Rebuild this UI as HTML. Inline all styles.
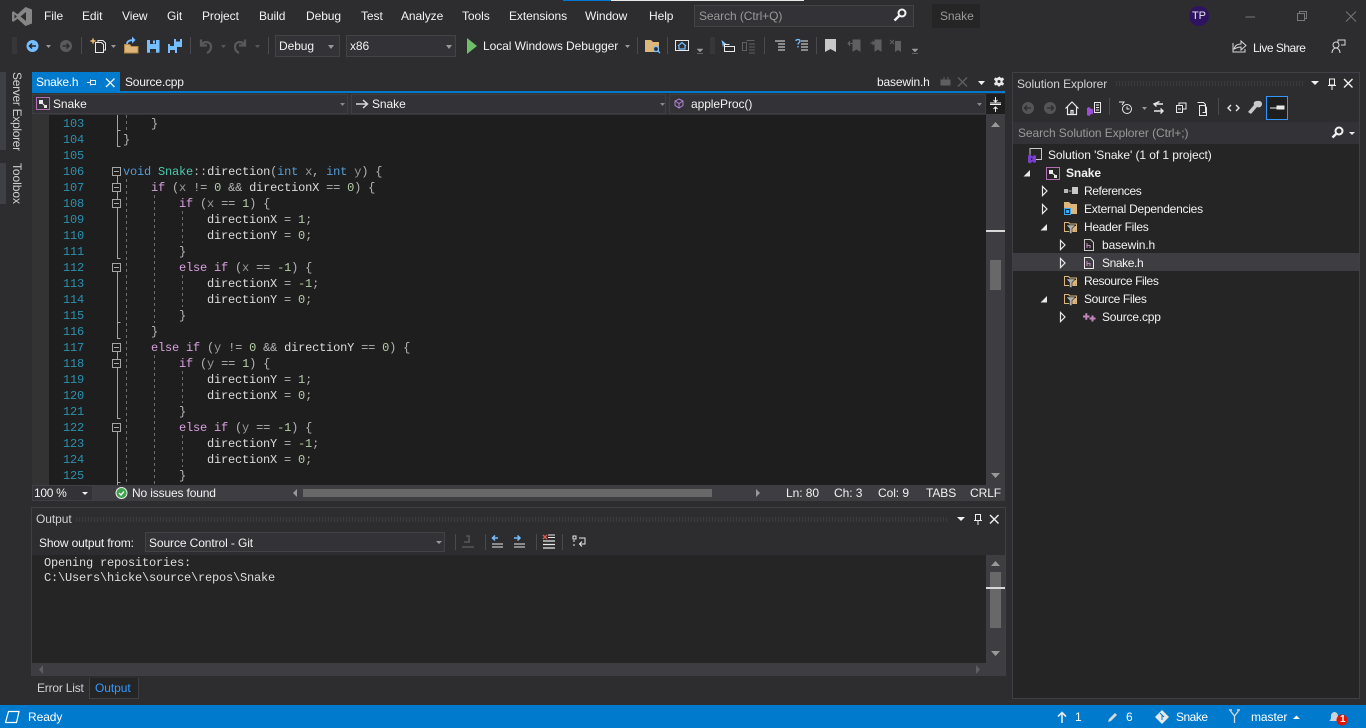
<!DOCTYPE html>
<html><head><meta charset="utf-8"><title>Snake</title>
<style>
html,body{margin:0;padding:0;background:#2d2d30;width:1366px;height:728px;overflow:hidden}
body{position:relative;font:12px/16px "Liberation Sans",sans-serif;color:#f1f1f1}
.a{position:absolute}
.t{position:absolute;white-space:pre;line-height:16px;letter-spacing:-.07px}
.b{position:absolute;box-sizing:border-box}
svg{position:absolute;overflow:visible}
#code{position:absolute;left:123px;top:115px;font:12px/16px "Liberation Mono",monospace;letter-spacing:-.2px;color:#b4b4b4;white-space:pre}
#nums{position:absolute;left:58px;top:115px;width:26px;text-align:right;font:12px/16px "Liberation Mono",monospace;letter-spacing:-.2px;color:#2b91af;white-space:pre}
.k{color:#569cd6}.c{color:#d8a0df}.y{color:#4ec9b0}.p{color:#9a9a9a}.n{color:#b5cea8}.i{color:#dcdcdc}
.dots{position:absolute;height:5px;background-image:radial-gradient(#46464a 35%,transparent 40%);background-size:3px 2px}
</style></head><body>
<div class="a" style="left:563px;top:0;width:48px;height:1px;background:#0078d4"></div>
<div class="a" style="left:611px;top:0;width:193px;height:1px;background:#e8e8e8"></div>

<svg style="left:0;top:0" width="40" height="30"><path d="M25.500 7L32 9.500V23.500L25.500 26L17.500 18.800L13.500 21.800L12 21V12L13.500 11.200L17.500 14.200zM26 12L20.500 16.500L26 21zM14.500 14.300V18.700L16.800 16.500z" fill="#868686" fill-rule="evenodd"/></svg>
<span class="t" style="left:44px;top:8px">File</span>
<span class="t" style="left:82px;top:8px">Edit</span>
<span class="t" style="left:122px;top:8px">View</span>
<span class="t" style="left:167px;top:8px">Git</span>
<span class="t" style="left:202px;top:8px">Project</span>
<span class="t" style="left:259px;top:8px">Build</span>
<span class="t" style="left:306px;top:8px">Debug</span>
<span class="t" style="left:361px;top:8px">Test</span>
<span class="t" style="left:401px;top:8px">Analyze</span>
<span class="t" style="left:462px;top:8px">Tools</span>
<span class="t" style="left:509px;top:8px">Extensions</span>
<span class="t" style="left:585px;top:8px">Window</span>
<span class="t" style="left:649px;top:8px">Help</span>

<div class="b" style="left:694px;top:5px;width:220px;height:22px;background:#333337;border:1px solid #434346"></div>
<span class="t" style="left:699px;top:8px;color:#999">Search (Ctrl+Q)</span>
<svg style="left:893px;top:8px" width="14" height="14" viewBox="0 0 14 14"><circle cx="9" cy="5" r="3.500" fill="none" stroke="#f1f1f1" stroke-width="2"/><path d="M6.500 7.500L1.500 12.500" stroke="#f1f1f1" stroke-width="2.400"/></svg>
<div class="b" style="left:932px;top:4px;width:48px;height:24px;background:#252526"></div>
<span class="t" style="left:940px;top:8px;color:#999">Snake</span>
<div class="b" style="left:1189px;top:6px;width:20px;height:20px;border-radius:50%;background:#2e1460"></div>
<span class="t" style="left:1192px;top:8px;font-size:11px;color:#e8e8e8">TP</span>
<svg style="left:1245px;top:10px" width="110" height="14"><path d="M0.500 7H10" stroke="#777" /><path d="M52.500 3.500h7v7h-7zM54.500 3.500v-2h7v7h-2" fill="none" stroke="#777"/><path d="M101 1.500l10 10M111 1.500l-10 10" stroke="#777"/></svg>

<!-- toolbar -->
<div class="a" style="left:12px;top:37px;width:5px;height:17px;background-image:radial-gradient(#55555a 40%,transparent 45%);background-size:2px 2px"></div>
<div class="a" style="left:710px;top:37px;width:5px;height:17px;background-image:radial-gradient(#55555a 40%,transparent 45%);background-size:2px 2px"></div>
<svg style="left:0;top:0" width="1366" height="72">
<circle cx="32.500" cy="46" r="6" fill="#75beff"/><path d="M36 46h-6M32 43.500L29.500 46l2.500 2.500" fill="none" stroke="#252526" stroke-width="1.500"/>
<path d="M46 45h5l-2.500 3z" fill="#999"/>
<circle cx="66" cy="46" r="6" fill="#5a5a5c"/><path d="M62.500 46h6M66.500 43.500L69 46l-2.500 2.500" fill="none" stroke="#2d2d30" stroke-width="1.500"/>
<path d="M81.500 37v17" stroke="#4a4a4e"/>
<path d="M95.500 42.500h6l2 2v8h-8zM98 42.500v-2h5l2.500 2.500v7h-2" fill="none" stroke="#e8e8e8"/><path d="M93 37.500l1 2.500 2.500 1-2.500 1-1 2.500-1-2.500-2.500-1 2.500-1z" fill="#e8b96c"/>
<path d="M111 45h5l-2.500 3z" fill="#999"/>
<path d="M124.500 44.500h5l2 2h6.500v6.500h-13.500z" fill="#dcb67a" stroke="#b5873f"/><path d="M127 44c0-3 3-4 7-4" fill="none" stroke="#75beff" stroke-width="1.800"/><path d="M132 36.500l3.500 3.500-3.500 3.500z" fill="#75beff"/>
<path d="M147 40h12.500v12.700H147z" fill="#75beff"/><path d="M150 40h6v4h-6zM150 49h6v3.700h-6z" fill="#2d2d30"/><rect x="153" y="40.500" width="2" height="3" fill="#75beff"/>
<path d="M168 44h9v9h-9z" fill="#75beff"/><path d="M174 39h8v8h-5v-3h-3z" fill="#75beff"/><path d="M170 50h5v3h-5zM176 39h4v2.500h-4zM170 44h4v2h-4z" fill="#2d2d30"/>
<path d="M190.500 37v17" stroke="#4a4a4e"/>
<path d="M201 39.500v6h6M201 45.500c3-5 10-4.500 10 1.500 0 3-2 5-4 6" fill="none" stroke="#58585b" stroke-width="2.300"/>
<path d="M221 45h5l-2.500 3z" fill="#58585b"/>
<path d="M245 39.500v6h-6M245 45.500c-3-5-10-4.500-10 1.500 0 3 2 5 4 6" fill="none" stroke="#58585b" stroke-width="2.300"/>
<path d="M255 45h5l-2.500 3z" fill="#58585b"/>
<path d="M268.500 37v17" stroke="#4a4a4e"/>
<path d="M467 38l10 8-10 8z" fill="#6fbf6a"/>
<path d="M625 45h5l-2.500 3z" fill="#999"/>
<path d="M637.500 37v17" stroke="#4a4a4e"/>
<path d="M645 40h6l2 2h6v10h-14z" fill="#dcb67a"/><circle cx="656" cy="49" r="2.500" fill="#2d2d30" stroke="#75beff" stroke-width="1.300"/><path d="M658 51l2 2" stroke="#75beff" stroke-width="1.300"/>
<path d="M667.500 37v17" stroke="#4a4a4e"/>
<path d="M675.500 40.500h13v10h-13z" fill="none" stroke="#e8e8e8"/><path d="M678 46l4-3.500 4 3.500M679 46v3h6v-3" fill="none" stroke="#75beff" stroke-width="1.200"/>
<path d="M697 49h6l-3 3zM697 53.500h6" fill="#999" stroke="#999" stroke-width=".5"/>
<path d="M721.500 40l5 4-2.500.5-1 3z" fill="#75beff"/><path d="M724.500 46.500h10v5h-10z M724.500 46.500v-2h5" fill="none" stroke="#e8e8e8"/>
<path d="M742.500 42.500h4v8h-4zM746.500 40.500h8M749 44h6M749 47h6M749 50h6M749 53h6" fill="none" stroke="#5f5f62"/>
<path d="M764.500 37v17" stroke="#4a4a4e"/>
<path d="M775 41h10M778 44h7M778 47h7M778 50h7" stroke="#e8e8e8"/>
<path d="M801 41h7M801 44h7M801 47h7M801 50h7" stroke="#e8e8e8"/><path d="M796 41c0-2 4-2 4 0 0 2-2 1.500-2 3.500M798 46v1.500" fill="none" stroke="#75beff" stroke-width="1.300"/>
<path d="M816.500 37v17" stroke="#4a4a4e"/>
<path d="M825 39h11v13l-5.500-3-5.500 3z" fill="#c8c8c8"/>
<path d="M853 40h7v11l-3.500-2-3.500 2zM848 43.500h5M850 41l-2 2.500 2 2.500" fill="#5f5f62" stroke="#5f5f62"/>
<path d="M875 40h6v11l-3-2-3 2zM870 43h5M872.500 41l2 2-2 2" fill="#5f5f62" stroke="#5f5f62"/>
<path d="M895 41h6v11l-3-2-3 2z" fill="#5f5f62"/><path d="M890 40l4 4M894 40l-4 4" stroke="#5f5f62"/>
<path d="M912 49h6l-3 3zM912 53.500h6" fill="#999" stroke="#999" stroke-width=".5"/>
<path d="M1233 43v9h12v-3M1234 49c1-4 4-5 7-5v-3l5 4.500-5 4.500v-3c-3 0-5 1-7 2z" fill="none" stroke="#d8d8d8"/>
<circle cx="1336" cy="45" r="3" fill="none" stroke="#d8d8d8"/><path d="M1332 53c0-3 2-5 4-5s4 2 4 5M1338 43v-3h7v5h-4" fill="none" stroke="#d8d8d8"/>
</svg>
<span class="t" style="left:483px;top:38px">Local Windows Debugger</span>
<div class="b" style="left:275px;top:35px;width:65px;height:22px;background:#333337;border:1px solid #434346"></div>
<span class="t" style="left:279px;top:38px">Debug</span>
<div class="a" style="left:328px;top:45px;border:3px solid transparent;border-top:4px solid #999"></div>
<div class="b" style="left:346px;top:35px;width:110px;height:22px;background:#333337;border:1px solid #434346"></div>
<span class="t" style="left:350px;top:38px">x86</span>
<div class="a" style="left:446px;top:45px;border:3px solid transparent;border-top:4px solid #999"></div>
<span class="t" style="left:1253px;top:40px;letter-spacing:-.5px">Live Share</span>

<!-- left sidebar -->
<div class="a" style="left:0;top:72px;width:6px;height:78px;background:#3f3f46"></div>
<div class="a" style="left:0;top:163px;width:6px;height:41px;background:#3f3f46"></div>
<span class="t" style="left:9px;top:72px;writing-mode:vertical-rl;color:#d0d0d0;letter-spacing:-.3px">Server Explorer</span>
<span class="t" style="left:9px;top:163px;writing-mode:vertical-rl;color:#d0d0d0">Toolbox</span>

<!-- tabs -->
<div class="a" style="left:32px;top:72px;width:88px;height:19px;background:#007acc"></div>
<div class="a" style="left:32px;top:91px;width:973px;height:2px;background:#007acc"></div>
<span class="t" style="left:36px;top:74px;color:#fff;letter-spacing:-.25px">Snake.h</span>
<svg style="left:86px;top:78px" width="34" height="10"><path d="M1 4.500h3M4.500 1.500v6M4.500 2.500h5v4h-5z" fill="none" stroke="#e8e8e8"/><path d="M20 0.500l8.500 8.500M28.500 0.500L20 9" stroke="#f1f1f1" stroke-width="1.300"/></svg>
<span class="t" style="left:125px;top:74px;letter-spacing:-.2px">Source.cpp</span>
<span class="t" style="left:877px;top:74px;letter-spacing:-.15px">basewin.h</span>
<svg style="left:0;top:0" width="1366" height="100"><path d="M941 80h9v5h-9zM944 77v3M948 77v3" stroke="#5f5f62" fill="#5f5f62"/><path d="M958 77.500l9 9M967 77.500l-9 9" stroke="#5f5f62" stroke-width="1.300"/><path d="M978 81h7l-3.500 4z" fill="#f1f1f1"/><path d="M999 76.500l1.500 1.500 2-.5 1 2-1.500 1.500 0 1 1.500 1.500-1 2-2-.5-1.500 1.500h-1l-1.500-1.500-2 .5-1-2 1.500-1.500v-1l-1.500-1.500 1-2 2 .5z" fill="#e8e8e8" transform="translate(.5 0)"/><circle cx="999" cy="81.500" r="1.500" fill="#2d2d30"/></svg>

<!-- nav bar -->
<div class="a" style="left:32px;top:93px;width:973px;height:22px;background:#333337"></div>
<div class="b" style="left:32px;top:94px;width:316px;height:20px;background:#333337;border:1px solid #3f3f42"></div>
<div class="b" style="left:351px;top:94px;width:315px;height:20px;background:#333337;border:1px solid #3f3f42"></div>
<div class="b" style="left:669px;top:94px;width:317px;height:20px;background:#333337;border:1px solid #3f3f42"></div>
<div class="a" style="left:986px;top:94px;width:19px;height:20px;background:#1e1e1e"></div>
<svg style="left:0;top:0" width="1366" height="120">
<path d="M36.500 97.500h13v12h-13z" fill="none" stroke="#b46eb4"/><path d="M39 100h4v4h-4zM44 105h3v3h-3z" fill="#e8e8e8"/><path d="M42 103l3 3" stroke="#e8e8e8"/>
<path d="M340 103h5l-2.500 3z M660 103h5l-2.500 3zM977 103h5l-2.500 3z" fill="#888"/>
<path d="M356 104h11M363 100l4.500 4-4.500 4" fill="none" stroke="#d8d8d8" stroke-width="1.500"/>
<path d="M679 99l4 2v4.500l-4 2.500-4-2.500v-4.500zM675 101l4 2.500 4-2.500M679 103.500v4.500" fill="none" stroke="#b180d7"/>
<path d="M990 104.500h11M995.500 97v5M993.500 100l2 2 2-2M995.500 112v-5M993.500 109l2-2 2 2M990 103h11" fill="none" stroke="#f1f1f1"/>
</svg>
<span class="t" style="left:53px;top:96px">Snake</span>
<span class="t" style="left:372px;top:96px">Snake</span>
<span class="t" style="left:691px;top:96px">appleProc()</span>

<!-- editor -->
<div class="a" style="left:32px;top:115px;width:17px;height:370px;background:#333333"></div>
<div class="a" style="left:49px;top:115px;width:937px;height:370px;background:#1e1e1e;overflow:hidden">
<div class="a" style="left:-49px;top:-115px;width:1000px;height:500px">
<svg style="left:0;top:0" width="1000" height="500">
<g stroke="#a5a5a5" fill="none">
<path d="M117.500 115v31.500h3M117.500 130.500h3M117.500 175.500v8M117.500 191.500v8M117.500 207.500v51h3M117.500 271.500v51h3M117.500 322.500v16h3M117.500 351.500v8M117.500 367.500v51h3M117.500 431.500v51h3M117.500 482.500v3"/>
<g fill="#1e1e1e">
<rect x="112.500" y="167.500" width="8" height="8"/><rect x="112.500" y="183.500" width="8" height="8"/><rect x="112.500" y="199.500" width="8" height="8"/><rect x="112.500" y="263.500" width="8" height="8"/><rect x="112.500" y="343.500" width="8" height="8"/><rect x="112.500" y="359.500" width="8" height="8"/><rect x="112.500" y="423.500" width="8" height="8"/>
</g>
<path d="M114 171.500h5M114 187.500h5M114 203.500h5M114 267.500h5M114 347.500h5M114 363.500h5M114 427.500h5"/>
</g>
<g stroke="#6f6f6f" stroke-dasharray="3 3" fill="none">
<path d="M126.500 115v16M126.500 179v306M154.500 195v128M154.500 355v130M182.500 211v32M182.500 275v32M182.500 371v32M182.500 435v32"/>
</g>
</svg>
<div id="nums" style="top:116px">103
104
105
106
107
108
109
110
111
112
113
114
115
116
117
118
119
120
121
122
123
124
125</div>
<div id="code" style="top:116px">    }
}

<span class="k">void</span> <span class="y">Snake</span>::<span class="i">direction</span>(<span class="k">int</span> <span class="p">x</span>, <span class="k">int</span> <span class="p">y</span>) {
    <span class="c">if</span> (<span class="p">x</span> != <span class="n">0</span> &amp;&amp; <span class="i">directionX</span> == <span class="n">0</span>) {
        <span class="c">if</span> (<span class="p">x</span> == <span class="n">1</span>) {
            <span class="i">directionX</span> = <span class="n">1</span>;
            <span class="i">directionY</span> = <span class="n">0</span>;
        }
        <span class="c">else if</span> (<span class="p">x</span> == <span class="n">-1</span>) {
            <span class="i">directionX</span> = <span class="n">-1</span>;
            <span class="i">directionY</span> = <span class="n">0</span>;
        }
    }
    <span class="c">else if</span> (<span class="p">y</span> != <span class="n">0</span> &amp;&amp; <span class="i">directionY</span> == <span class="n">0</span>) {
        <span class="c">if</span> (<span class="p">y</span> == <span class="n">1</span>) {
            <span class="i">directionY</span> = <span class="n">1</span>;
            <span class="i">directionX</span> = <span class="n">0</span>;
        }
        <span class="c">else if</span> (<span class="p">y</span> == <span class="n">-1</span>) {
            <span class="i">directionY</span> = <span class="n">-1</span>;
            <span class="i">directionX</span> = <span class="n">0</span>;
        }</div>
</div></div>

<!-- editor v-scroll -->
<div class="a" style="left:986px;top:114px;width:19px;height:371px;background:#3e3e42"></div>
<div class="a" style="left:990px;top:260px;width:11px;height:30px;background:#686868"></div>
<div class="a" style="left:986px;top:230px;width:19px;height:2px;background:#d8d8d8"></div>
<svg style="left:0;top:0" width="1366" height="490"><path d="M991 127l4.500-5 4.500 5zM991 473l4.500 5 4.500-5z" fill="#999"/></svg>

<!-- editor status -->
<div class="a" style="left:32px;top:485px;width:973px;height:16px;background:#3e3e42"></div>
<div class="b" style="left:32px;top:485px;width:61px;height:16px;background:#333337;border:1px solid #3f3f46"></div>
<span class="t" style="left:34px;top:485px;letter-spacing:-.3px">100 %</span>
<div class="a" style="left:82px;top:492px;border:3px solid transparent;border-top:3px solid #f1f1f1"></div>
<svg style="left:0;top:0" width="1366" height="505"><circle cx="121.500" cy="493" r="5.500" fill="#3ca34c" stroke="#e8e8e8"/><path d="M119 493l2 2 3-3.500" fill="none" stroke="#fff" stroke-width="1.300"/><path d="M297 489v8l-4-4zM756 489v8l4-4z" fill="#999"/></svg>
<span class="t" style="left:132px;top:485px;color:#f1f1f1;letter-spacing:-.15px">No issues found</span>
<div class="a" style="left:303px;top:489px;width:409px;height:8px;background:#686868"></div>
<span class="t" style="left:786px;top:485px">Ln: 80</span>
<span class="t" style="left:834px;top:485px">Ch: 3</span>
<span class="t" style="left:878px;top:485px">Col: 9</span>
<span class="t" style="left:926px;top:485px">TABS</span>
<span class="t" style="left:970px;top:485px">CRLF</span>

<!-- output -->
<div class="b" style="left:31px;top:507px;width:975px;height:191px;border:1px solid #3f3f46;background:#2d2d30"></div>
<span class="t" style="left:36px;top:511px;color:#d0d0d0">Output</span>
<div class="dots" style="left:75px;top:517px;width:874px"></div>
<span class="t" style="left:39px;top:535px;letter-spacing:-.15px">Show output from:</span>
<div class="b" style="left:145px;top:532px;width:300px;height:20px;background:#333337;border:1px solid #434346"></div>
<span class="t" style="left:149px;top:535px;letter-spacing:-.1px">Source Control - Git</span>
<svg style="left:0;top:0" width="1366" height="560">
<path d="M957 517h8l-4 4z" fill="#f1f1f1"/>
<path d="M975.500 514.500h5v6h-5zM974 520.500h8M978 521v4" fill="none" stroke="#f1f1f1"/>
<path d="M990 515l8.500 8.500M998.500 515L990 523.500" stroke="#f1f1f1" stroke-width="1.400"/>
<path d="M436 541h6l-3 3z" fill="#999"/>
<path d="M455.500 534v16M485.500 534v16M536.500 534v16M562.500 534v16" stroke="#4a4a4e"/>
<path d="M466 536h3v6M464 542h6M462 547h12" fill="none" stroke="#5f5f62" stroke-width="1.300"/>
<path d="M492 544h11M492 547h11" stroke="#e8e8e8"/><path d="M498 538h-5M495 535.500L492.500 538l2.500 2.500" fill="none" stroke="#75beff" stroke-width="1.500"/>
<path d="M514 544h11M514 547h11" stroke="#e8e8e8"/><path d="M514 538h6M517.500 535.500L520 538l-2.500 2.500" fill="none" stroke="#75beff" stroke-width="1.500"/>
<path d="M543 541h12M543 544.500h12M543 548h12" stroke="#e8e8e8" stroke-width="1.300"/><path d="M548 535h7M548 537.500h7" stroke="#e8e8e8"/><path d="M543 535l4 4M547 535l-4 4" stroke="#e05a4f" stroke-width="1.300"/>
<path d="M579 538h6v6h-5M582 541.500L579.500 544l2.500 2.500" fill="none" stroke="#e8e8e8"/><path d="M573 536h3v3h-3zM573 541h2M573 545h2" fill="none" stroke="#e8e8e8"/>
</svg>
<div class="a" style="left:32px;top:555px;width:954px;height:108px;background:#252526"></div>
<div class="a" style="left:44px;top:556px;font:12px/15px 'Liberation Mono',monospace;letter-spacing:-.2px;color:#dcdcdc;white-space:pre">Opening repositories:
C:\Users\hicke\source\repos\Snake</div>
<div class="a" style="left:986px;top:555px;width:19px;height:108px;background:#3e3e42"></div>
<div class="a" style="left:990px;top:572px;width:11px;height:56px;background:#686868"></div>
<div class="a" style="left:986px;top:587px;width:19px;height:2px;background:#d8d8d8"></div>
<div class="a" style="left:32px;top:663px;width:973px;height:13px;background:#3e3e42"></div>
<svg style="left:0;top:0" width="1366" height="680"><path d="M991 566l4.500-5 4.500 5zM991 651l4.500 5 4.500-5z" fill="#999"/><path d="M43 665v9l-4-4.500zM976 665v9l4-4.500z" fill="#5f5f62"/></svg>
<div class="a" style="left:31px;top:676px;width:975px;height:22px;background:#2d2d30"></div>
<span class="t" style="left:37px;top:680px;color:#d0d0d0;letter-spacing:-.2px">Error List</span>
<div class="b" style="left:89px;top:678px;width:50px;height:21px;background:#252526;border:1px solid #3f3f46;border-top:0"></div>
<span class="t" style="left:95px;top:680px;color:#3399ff">Output</span>

<!-- Solution explorer -->
<div class="b" style="left:1012px;top:72px;width:348px;height:627px;border:1px solid #3f3f46;background:#2d2d30"></div>
<span class="t" style="left:1017px;top:76px;color:#d0d0d0">Solution Explorer</span>
<div class="dots" style="left:1115px;top:81px;width:190px"></div>
<svg style="left:0;top:0" width="1366" height="145">
<path d="M1311 81h8l-4 4z" fill="#f1f1f1"/>
<path d="M1329.500 79h5v6h-5zM1328 85.500h8M1332 86v4" fill="none" stroke="#f1f1f1"/>
<path d="M1344 79l8.500 8.500M1352.500 79l-8.500 8.500" stroke="#f1f1f1" stroke-width="1.400"/>
<circle cx="1028" cy="108" r="6" fill="#555558"/><path d="M1031 108h-6M1027 105.500l-2.500 2.500 2.500 2.500" fill="none" stroke="#2d2d30" stroke-width="1.300"/>
<circle cx="1050" cy="108" r="6" fill="#555558"/><path d="M1047 108h6M1051 105.500l2.500 2.500-2.500 2.500" fill="none" stroke="#2d2d30" stroke-width="1.300"/>
<path d="M1065.500 108.500l6.500-6.500 6.500 6.500M1067.500 107v7.500h9v-7.500M1071 114.500v-4h2v4" fill="none" stroke="#e8e8e8" stroke-width="1.200"/>
<path d="M1094.500 102.500h6v10h-6zM1096 105h3M1096 107.500h3M1096 110h3" fill="none" stroke="#e8e8e8"/><path d="M1087 108l2-1 3 2.500 1-1v6l-1-1-3 2.500-2-1z" fill="#9b4fd8"/>
<path d="M1109.500 98v17" stroke="#4a4a4e"/>
<circle cx="1127" cy="109" r="4.500" fill="none" stroke="#e8e8e8"/><path d="M1127 106.500V109h2.500M1119 102h5l-2 3" fill="none" stroke="#e8e8e8"/>
<path d="M1142 107h5l-2.500 3z" fill="#999"/>
<path d="M1154 104h9M1159.500 101.500L1154 104l2.500 2.500M1154 111h9M1160.500 108.500L1163 111l-2.500 2.500" fill="none" stroke="#e8e8e8" stroke-width="1.400"/>
<path d="M1176.500 105.500h6v7h-6zM1179 105.500v-2.500h7v6h-3.500M1178 109h3" fill="none" stroke="#e8e8e8"/>
<path d="M1197.500 102.500h6l2 2v8h-3M1199.500 105.500h5l2 2v8h-7z" fill="none" stroke="#e8e8e8"/>
<path d="M1218.500 98v17" stroke="#4a4a4e"/>
<path d="M1231 105l-3 3 3 3M1236 105l3 3-3 3" fill="none" stroke="#e8e8e8" stroke-width="1.400"/>
<path d="M1257 101c2-.5 5 0 5 3 0 3-3 4-5 3l-6 7-3-2 6-7c-1-3 1-4 3-4z" fill="#c8c8c8"/>
<rect x="1266.500" y="96.500" width="21" height="23" fill="#1e1e1e" stroke="#3399ff"/>
<path d="M1270 108h7M1277 106h7v3h-7z" stroke="#e8e8e8" fill="#e8e8e8"/>
</svg>
<div class="a" style="left:1013px;top:122px;width:346px;height:22px;background:#333337"></div>
<span class="t" style="left:1018px;top:125px;color:#999;letter-spacing:-.08px">Search Solution Explorer (Ctrl+;)</span>
<svg style="left:0;top:0" width="1366" height="145"><circle cx="1339" cy="131" r="3.500" fill="none" stroke="#f1f1f1" stroke-width="2"/><path d="M1336.500 133.500l-4 4" stroke="#f1f1f1" stroke-width="2.400"/><path d="M1349 132h6l-3 3z" fill="#e8e8e8"/></svg>
<div class="a" style="left:1013px;top:144px;width:346px;height:554px;background:#252526"></div>
<div class="a" style="left:1013px;top:253px;width:346px;height:18px;background:#3e3e42"></div>
<svg style="left:0;top:0" width="1366" height="330">
<path d="M1030 155v-6.500h11.500v11h-7" fill="none" stroke="#c8c8c8"/><path d="M1028 155.500l2-1 2.500 2 1.800-1.500 1.700.8v6.400l-1.700.8-1.800-1.500-2.500 2-2-1z" fill="#7a3fd0"/><path d="M1031 157.800v2.400l2-1.200z" fill="#252526"/>
<path d="M1023.500 176.500l6.500-6.500v6.500z" fill="#e8e8e8"/>
<path d="M1046.500 167.500h13v12h-13z" fill="none" stroke="#b46eb4"/><path d="M1049 170h4v4h-4zM1054 175h3v3h-3z" fill="#e8e8e8"/><path d="M1052 173l4 3" stroke="#e8e8e8"/>
<path d="M1042.500 186.500v9l4.500-4.500zM1042.500 204.500v9l4.500-4.500z" fill="none" stroke="#e8e8e8" stroke-width="1.200"/>
<path d="M1040.500 230.500l6.500-6.500v6.500zM1040.500 302.500l6.500-6.500v6.500z" fill="#e8e8e8"/>
<path d="M1064 189h4v4h-4z" fill="#b8b8b8"/><rect x="1068.500" y="190.500" width="3" height="1" fill="#b8b8b8"/><rect x="1072" y="187" width="6" height="7" fill="#c8c8c8"/>
<path d="M1064 202h5l2 2h6v10h-13z" fill="#dcb67a"/><rect x="1064.500" y="208.500" width="6" height="6" fill="#252526" stroke="#3ea8f0"/><rect x="1066" y="210" width="3" height="3" fill="#3ea8f0"/>
<g id="f"><path d="M1064.500 231.500v-9h4l1.500 1.500h6.500v7.500z" fill="none" stroke="#dcb67a"/><path d="M1068 226h9l-1.500 5.500h-4z" fill="#dcb67a"/><path d="M1066 225h9.500l-3.500 3.500v5h-2.500v-5z" fill="#b0b0b0" stroke="#252526" stroke-width=".6"/></g>
<use href="#f" y="54"/><use href="#f" y="72"/>
<path d="M1060.500 240.500v9l4.500-4.500zM1060.500 258.500v9l4.500-4.500zM1060.500 312.500v9l4.500-4.500z" fill="none" stroke="#e8e8e8" stroke-width="1.200"/>
<path d="M1084.500 239.500h6l3 3v8h-9z" fill="none" stroke="#c8c8c8"/><path d="M1087 243v5M1087 245.500h3v2.500" fill="none" stroke="#c586c0"/>
<path d="M1084.500 257.500h6l3 3v8h-9z" fill="none" stroke="#e8e8e8"/><path d="M1087 261v5M1087 263.500h3v2.500" fill="none" stroke="#c586c0"/>
<path d="M1083 315.500h6.500v2H1083zM1085.300 313.300h2v6.400h-2zM1089.500 317.500h6v2h-6zM1091.500 315.500h2v6h-2z" fill="#c586c0"/>
</svg>
<span class="t" style="left:1048px;top:147px">Solution 'Snake' (1 of 1 project)</span>
<span class="t" style="left:1066px;top:165px;font-weight:bold">Snake</span>
<span class="t" style="left:1084px;top:183px;letter-spacing:-.4px">References</span>
<span class="t" style="left:1084px;top:201px;letter-spacing:-.25px">External Dependencies</span>
<span class="t" style="left:1084px;top:219px;letter-spacing:-.3px">Header Files</span>
<span class="t" style="left:1102px;top:237px;letter-spacing:-.1px">basewin.h</span>
<span class="t" style="left:1102px;top:255px;letter-spacing:-.4px">Snake.h</span>
<span class="t" style="left:1084px;top:273px;letter-spacing:-.4px">Resource Files</span>
<span class="t" style="left:1084px;top:291px;letter-spacing:-.35px">Source Files</span>
<span class="t" style="left:1102px;top:309px;letter-spacing:-.2px">Source.cpp</span>

<!-- status bar -->
<div class="a" style="left:0;top:705px;width:1366px;height:23px;background:#007acc"></div>
<svg style="left:0;top:0" width="1366" height="728">
<path d="M8.500 711.500h10.500l-2.500 11H5.500z" fill="none" stroke="#fff" stroke-width="1.200"/>
<path d="M1062 723v-10M1058 716.500l4-4 4 4" fill="none" stroke="#e8e8e8" stroke-width="1.600"/>
<path d="M1108 722l1-3 6-6 2 2-6 6z" fill="#d8d8d8"/>
<path d="M1162 710l7 7-7 7-7-7z" fill="#e8e8e8"/><path d="M1160 713l4 4M1162 715v5" stroke="#007acc"/>
<path d="M1230.500 711l4 5v7M1238.500 711l-4 5" fill="none" stroke="#d8d8d8" stroke-width="1.300"/><path d="M1229 710h3M1237 710h3" stroke="#d8d8d8" stroke-width="1.500"/>
<path d="M1293 719l3.500-3.500 3.500 3.500z" fill="#fff"/>
<path d="M1329 721c2-1 2-3 2-5 0-2 1.500-4 3.500-4s3.500 2 3.500 4c0 2 0 4 2 5z" fill="#c8d4dc"/>
<circle cx="1342" cy="720" r="5.500" fill="#e51400"/>
</svg>
<span class="t" style="left:28px;top:709px;color:#fff">Ready</span>
<span class="t" style="left:1075px;top:709px;color:#fff">1</span>
<span class="t" style="left:1126px;top:709px;color:#fff">6</span>
<span class="t" style="left:1176px;top:709px;color:#fff;letter-spacing:-.5px">Snake</span>
<span class="t" style="left:1251px;top:709px;color:#fff">master</span>
<span class="t" style="left:1340px;top:712px;color:#fff;font-size:10px;font-weight:bold">1</span>
</body></html>
